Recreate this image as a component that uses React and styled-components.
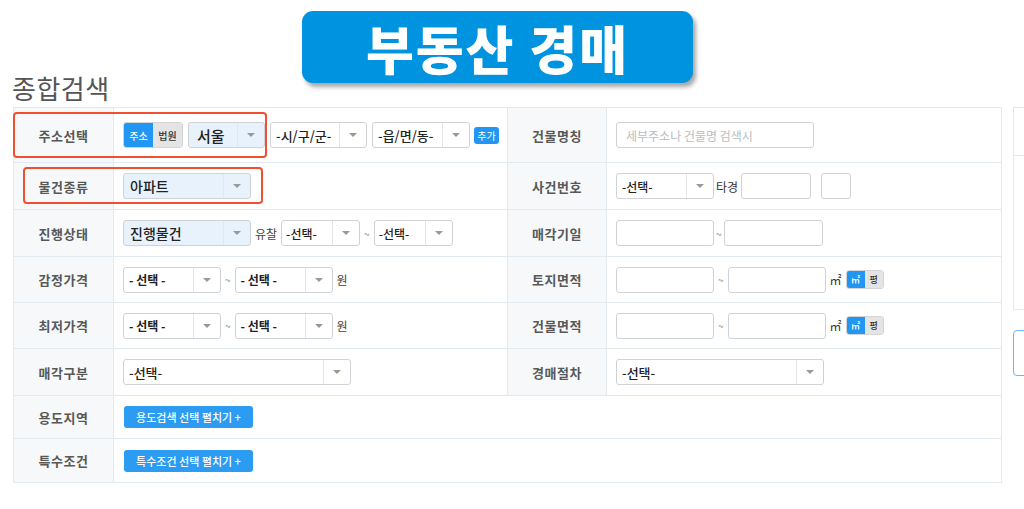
import React from 'react';
import styled, { createGlobalStyle } from 'styled-components';

const GlobalStyle = createGlobalStyle`
  body {
    margin: 0;
    background: #fff;
    font-family: "Noto Sans CJK KR", "Noto Sans", sans-serif;
  }
`;

const Page = styled.div`
  width: 1024px;
  height: 509px;
  overflow: hidden;
`;

const Header = styled.header`
  display: flex;
  align-items: flex-start;
  height: 107px;
  padding-left: 12px;
`;

const Title = styled.h1`
  flex: 0 0 100px;
  margin: 72px 0 0;
  font-size: 26px;
  line-height: 32px;
  font-weight: 400;
  letter-spacing: 0.5px;
  white-space: nowrap;
  color: #555;
`;

const Banner = styled.div`
  margin: 11px 0 0 190px;
  width: 391px;
  height: 72px;
  border-radius: 11px;
  background: #0094e0;
  box-shadow: 3px 4px 4px rgba(0, 0, 0, 0.35);
  display: flex;
  align-items: center;
  justify-content: center;
  color: #fff;
  font-size: 52px;
  font-weight: 900;
  letter-spacing: 2px;
`;

const Body = styled.div`
  display: flex;
  align-items: flex-start;
  padding-left: 13px;
`;

const Grid = styled.div`
  position: relative;
  display: grid;
  grid-template-columns: 100px 394px 99px 395px;
  grid-template-rows: 55px 47px 47px 46px 46px 47px 43px 44px;
  border-top: 1px solid #e3eaef;
  border-left: 1px solid #e3eaef;
`;

const Label = styled.div`
  display: flex;
  align-items: center;
  justify-content: center;
  background: #f6f8fa;
  border-right: 1px solid #e3eaef;
  border-bottom: 1px solid #e3eaef;
  font-size: 13px;
  font-weight: 700;
  color: #585858;
  letter-spacing: 0.5px;
`;

const Value = styled.div`
  display: flex;
  align-items: center;
  gap: ${(p) => p.$gap || 5}px;
  padding-left: 9px;
  border-right: 1px solid #e3eaef;
  border-bottom: 1px solid #e3eaef;
  grid-column: ${(p) => (p.$wide ? 'span 3' : 'auto')};
  font-size: 12px;
  color: #444;
`;

const SelectBox = styled.div`
  display: flex;
  align-items: stretch;
  box-sizing: border-box;
  width: ${(p) => p.$w}px;
  height: 26px;
  border: 1px solid #cfd3d7;
  border-radius: 3px;
  background: ${(p) => (p.$tint ? '#e8f2fd' : '#fff')};
`;

const SelectText = styled.span`
  flex: 1;
  display: flex;
  align-items: center;
  padding-left: ${(p) => p.$pad || 6}px;
  font-size: ${(p) => p.$size || 13}px;
  font-weight: ${(p) => p.$weight || 500};
  color: #222;
  white-space: nowrap;
  overflow: hidden;
`;

const Arrow = styled.span`
  width: 26px;
  display: flex;
  align-items: center;
  justify-content: center;
  border-left: 1px solid #e4e6e8;

  &::after {
    content: '';
    border-left: 4px solid transparent;
    border-right: 4px solid transparent;
    border-top: 4px solid #999;
  }
`;

const Input = styled.div`
  box-sizing: border-box;
  width: ${(p) => p.$w}px;
  height: 26px;
  margin-left: ${(p) => p.$ml || 0}px;
  border: 1px solid #cfd3d7;
  border-radius: 3px;
  background: #fff;
  display: flex;
  align-items: center;
  padding-left: 9px;
  font-size: 12px;
  color: #b9bdc1;
`;

const Toggle = styled.div`
  display: flex;
  height: ${(p) => p.$h}px;
  border-radius: 3px;
  overflow: hidden;
  border: 1px solid #d4d4d4;
  box-sizing: border-box;
`;

const ToggleItem = styled.span`
  width: ${(p) => p.$w}px;
  display: flex;
  align-items: center;
  justify-content: center;
  font-size: ${(p) => p.$size || 10}px;
  font-weight: 500;
  background: ${(p) => (p.$on ? '#2196f3' : '#e4e4e4')};
  color: ${(p) => (p.$on ? '#fff' : '#333')};
`;

const SmallButton = styled.span`
  margin-left: -1px;
  width: 25px;
  height: 17px;
  border-radius: 3px;
  background: #2196f3;
  color: #fff;
  font-size: 10px;
  display: flex;
  align-items: center;
  justify-content: center;
`;

const BlueButton = styled.span`
  display: flex;
  align-items: center;
  justify-content: center;
  width: 129px;
  height: 22px;
  border-radius: 3px;
  background: #2b9cf2;
  color: #fff;
  font-size: 11px;
  font-weight: 500;
  margin-left: ${(p) => p.$ml || 0}px;
`;

const Text = styled.span`
  font-size: ${(p) => p.$size || 12}px;
  color: ${(p) => p.$color || '#444'};
`;

const Highlight = styled.div`
  position: absolute;
  left: ${(p) => p.$x}px;
  top: ${(p) => p.$y}px;
  width: ${(p) => p.$w}px;
  height: ${(p) => p.$h}px;
  box-sizing: border-box;
  border: 2px solid #f0502f;
  border-radius: 4px;
  pointer-events: none;
`;

const Side = styled.div`
  margin-left: 11px;
  display: flex;
  flex-direction: column;
  gap: 20px;
`;

const SidePanel = styled.div`
  width: 40px;
  height: 203px;
  border: 1px solid #e3e8ee;
  box-sizing: border-box;
  display: flex;
  flex-direction: column;
`;

const SideHead = styled.div`
  height: 47px;
  border-bottom: 1px solid #e3e8ee;
`;

const SideButton = styled.div`
  width: 40px;
  height: 46px;
  box-sizing: border-box;
  border: 1px solid #6cb6f2;
  border-radius: 4px;
`;

const Select = ({ w, tint, children, size, weight, pad }) => (
  <SelectBox $w={w} $tint={tint}>
    <SelectText $size={size} $weight={weight} $pad={pad}>{children}</SelectText>
    <Arrow />
  </SelectBox>
);

const AreaToggle = () => (
  <Toggle $h={19}>
    <ToggleItem $w={18} $on $size={9}>㎡</ToggleItem>
    <ToggleItem $w={18} $size={9}>평</ToggleItem>
  </Toggle>
);

const App = () => (
  <Page>
    <GlobalStyle />
    <Header>
      <Title>종합검색</Title>
      <Banner>부동산 경매</Banner>
    </Header>
    <Body>
      <Grid>
        <Label>주소선택</Label>
        <Value>
          <Toggle $h={26}>
            <ToggleItem $w={29} $on>주소</ToggleItem>
            <ToggleItem $w={29}>법원</ToggleItem>
          </Toggle>
          <Select w={77} tint size={15} pad={8}>서울</Select>
          <Select w={97} size={13} pad={5}>-시/구/군-</Select>
          <Select w={98} size={13} pad={5}>-읍/면/동-</Select>
          <SmallButton>추가</SmallButton>
        </Value>
        <Label>건물명칭</Label>
        <Value $gap={0}>
          <Input $w={198}>세부주소나 건물명 검색시</Input>
        </Value>

        <Label>물건종류</Label>
        <Value>
          <Select w={128} tint size={14}>아파트</Select>
        </Value>
        <Label>사건번호</Label>
        <Value $gap={2}>
          <Select w={98} size={12} pad={5}>-선택-</Select>
          <Text $size={12} $color="#333">타경</Text>
          <Input $w={70} $ml={1} />
          <Input $w={30} $ml={8} />
        </Value>

        <Label>진행상태</Label>
        <Value $gap={4}>
          <Select w={128} tint size={14}>진행물건</Select>
          <Text $size={12}>유찰</Text>
          <Select w={79} size={12} pad={4}>-선택-</Select>
          <Text $size={10} $color="#888">~</Text>
          <Select w={79} size={12} pad={4}>-선택-</Select>
        </Value>
        <Label>매각기일</Label>
        <Value $gap={2}>
          <Input $w={98} />
          <Text $size={10} $color="#888">~</Text>
          <Input $w={99} />
        </Value>

        <Label>감정가격</Label>
        <Value $gap={4}>
          <Select w={98} size={12} weight={700} pad={5}>- 선택 -</Select>
          <Text $size={10} $color="#888">~</Text>
          <Select w={98} size={12} weight={700} pad={5}>- 선택 -</Select>
          <Text $size={12}>원</Text>
        </Value>
        <Label>토지면적</Label>
        <Value $gap={4}>
          <Input $w={98} />
          <Text $size={10} $color="#888">~</Text>
          <Input $w={98} />
          <Text $size={12} $color="#333">㎡</Text>
          <AreaToggle />
        </Value>

        <Label>최저가격</Label>
        <Value $gap={4}>
          <Select w={98} size={12} weight={700} pad={5}>- 선택 -</Select>
          <Text $size={10} $color="#888">~</Text>
          <Select w={98} size={12} weight={700} pad={5}>- 선택 -</Select>
          <Text $size={12}>원</Text>
        </Value>
        <Label>건물면적</Label>
        <Value $gap={4}>
          <Input $w={98} />
          <Text $size={10} $color="#888">~</Text>
          <Input $w={98} />
          <Text $size={12} $color="#333">㎡</Text>
          <AreaToggle />
        </Value>

        <Label>매각구분</Label>
        <Value>
          <Select w={228} size={13} pad={5}>-선택-</Select>
        </Value>
        <Label>경매절차</Label>
        <Value>
          <Select w={208} size={13} pad={5}>-선택-</Select>
        </Value>

        <Label>용도지역</Label>
        <Value $wide>
          <BlueButton $ml={1}>용도검색 선택 펼치기 +</BlueButton>
        </Value>

        <Label>특수조건</Label>
        <Value $wide>
          <BlueButton $ml={1}>특수조건 선택 펼치기 +</BlueButton>
        </Value>

        <Highlight $x={-1} $y={4} $w={254} $h={46} />
        <Highlight $x={9} $y={59} $w={240} $h={37} />
      </Grid>
      <Side>
        <SidePanel>
          <SideHead />
        </SidePanel>
        <SideButton />
      </Side>
    </Body>
  </Page>
);

export default App;
